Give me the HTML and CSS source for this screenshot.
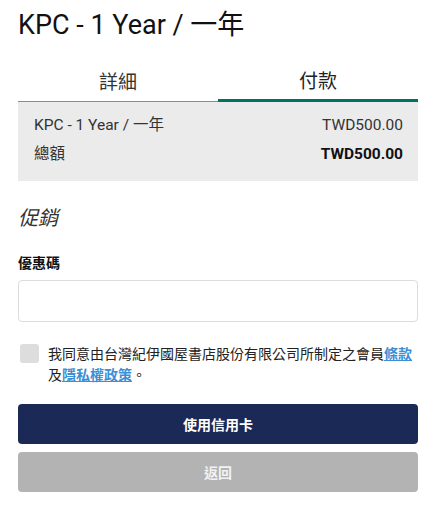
FILE: index.html
```html
<!DOCTYPE html>
<html lang="zh-Hant">
<head>
<meta charset="utf-8">
<title>KPC</title>
<link rel="stylesheet" href="styles.css">
</head>
<body>
<div class="page">
  <h1 class="title">KPC - 1 Year / 一年</h1>
  <div class="tabs">
    <div class="tab">詳細</div>
    <div class="tab active">付款</div>
  </div>
  <div class="summary">
    <div class="row"><span>KPC - 1 Year / 一年</span><span>TWD500.00</span></div>
    <div class="row"><span>總額</span><span class="total">TWD500.00</span></div>
  </div>
  <h2 class="promo">促銷</h2>
  <label class="label">優惠碼</label>
  <input class="input" type="text">
  <div class="agree">
    <span class="check"></span>
    <p class="agree-text">我同意由台灣紀伊國屋書店股份有限公司所制定之會員<a href="#">條款</a>及<a href="#">隱私權政策</a>。</p>
  </div>
  <button class="btn primary">使用信用卡</button>
  <button class="btn secondary">返回</button>
</div>
</body>
</html>
```
FILE: styles.css
```css
* { box-sizing: border-box; }
body {
  margin: 0;
  background: #fff;
  font-family: Roboto, "Noto Sans CJK TC", sans-serif;
  color: #222;
}
.page {
  margin: 0 8px 0 18px;
  display: flex;
  flex-direction: column;
}
.title {
  margin: 9px 0 0;
  font-size: 27px;
  font-weight: 400;
  line-height: 32px;
  color: #111;
}
.tabs {
  display: flex;
  margin-top: 19px;
}
.tab {
  flex: 1;
  height: 42px;
  display: flex;
  align-items: center;
  justify-content: center;
  font-size: 19px;
  color: #333;
  border-bottom: 1px solid #8c8c8c;
}
.tab.active {
  border-bottom: 3px solid #00735f;
  color: #222;
}
.summary {
  background: #ebebeb;
  padding: 9px 15px 12px 16px;
  font-size: 15.5px;
  color: #333;
}
.row {
  display: flex;
  justify-content: space-between;
  line-height: 29px;
}
.total {
  font-weight: 700;
  color: #111;
}
.promo {
  margin: 23px 0 0;
  font-size: 20px;
  font-weight: 400;
  font-style: italic;
  line-height: 28px;
  color: #333;
}
.label {
  margin-top: 21px;
  font-size: 14px;
  font-weight: 700;
  line-height: 20px;
  color: #111;
}
.input {
  margin-top: 7px;
  height: 42px;
  border: 1px solid #dcdcdc;
  border-radius: 4px;
  background: #fff;
  font-size: 14px;
}
.agree {
  display: flex;
  align-items: flex-start;
  margin-top: 22px;
}
.check {
  flex: none;
  width: 19px;
  height: 19px;
  margin-left: 2px;
  margin-right: 9px;
  background: #dddddd;
  border-radius: 3px;
}
.agree-text {
  margin: 0;
  font-size: 14px;
  line-height: 21px;
  color: #222;
}
.agree-text a {
  color: #3b8fd6;
  font-weight: 700;
  text-decoration: underline;
}
.btn {
  height: 40px;
  border: none;
  border-radius: 4px;
  font-family: Roboto, "Noto Sans CJK TC", sans-serif;
  font-size: 14px;
  font-weight: 700;
}
.primary {
  margin-top: 18px;
  background: #1b2956;
  color: #fff;
}
.secondary {
  margin-top: 8px;
  background: #b3b3b3;
  color: #f2f2f2;
}
```
